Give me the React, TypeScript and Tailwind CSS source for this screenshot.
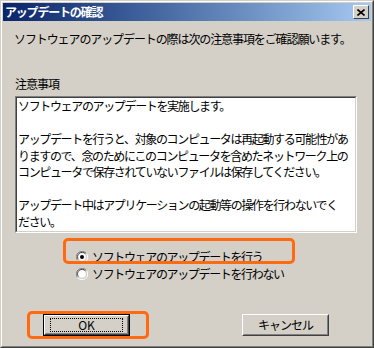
import React from "react";

const jp = "font-['Noto_Sans_CJK_JP','Noto_Sans_CJK_SC',sans-serif]";

function Radio({ checked }: { checked: boolean }): React.JSX.Element {
  return (
    <svg width="12" height="12" viewBox="0 0 12 12" className="shrink-0">
      <path d="M10.5 2.5 A5.3 5.3 0 0 0 1.5 9.5" fill="none" stroke="#808080" strokeWidth="1" />
      <path d="M9.5 3 A4.3 4.3 0 0 0 2.6 8.6" fill="none" stroke="#404040" strokeWidth="1" />
      <path d="M1.5 9.5 A5.3 5.3 0 0 0 10.5 2.5" fill="none" stroke="#ffffff" strokeWidth="1" />
      <path d="M2.6 8.6 A4.3 4.3 0 0 0 9.5 3" fill="none" stroke="#d4d0c8" strokeWidth="1" />
      <circle cx="6" cy="6" r="3.8" fill="#ffffff" />
      {checked ? <circle cx="6" cy="6" r="2" fill="#000000" /> : null}
    </svg>
  );
}

function WinButton({
  label,
  isDefault,
}: {
  label: string;
  isDefault?: boolean;
}): React.JSX.Element {
  const face = (
    <div className="flex h-full w-full border border-t-white border-l-white border-r-[#404040] border-b-[#404040]">
      <div className="flex h-full w-full items-center justify-center border border-t-[#d4d0c8] border-l-[#d4d0c8] border-r-[#808080] border-b-[#808080]">
        {isDefault ? (
          <div className="flex h-[14px] w-[73px] items-center justify-center border border-dotted border-black">
            <span className="text-[12px] leading-none text-black">{label}</span>
          </div>
        ) : (
          <span className="text-[12px] leading-none text-black tracking-[-1px]">{label}</span>
        )}
      </div>
    </div>
  );
  return isDefault ? (
    <div className="h-[22px] w-[87px] border border-black bg-[#d4d0c8]">{face}</div>
  ) : (
    <div className="h-[22px] w-[87px] bg-[#d4d0c8]">{face}</div>
  );
}

export default function App(): React.JSX.Element {
  const lines = [
    "ソフトウェアのアップデートを実施します。",
    "",
    "アップデートを行うと、対象のコンピュータは再起動する可能性があ",
    "りますので、念のためにこのコンピュータを含めたネットワーク上の",
    "コンピュータで保存されていないファイルは保存してください。",
    "",
    "アップデート中はアプリケーションの起動等の操作を行わないでく",
    "ださい。",
  ];

  return (
    <div className={`h-[348px] w-[374px] overflow-hidden ${jp}`}>
      <div className="h-full w-full border border-t-[#d4d0c8] border-l-[#d4d0c8] border-r-[#404040] border-b-[#404040] bg-[#d4d0c8]">
        <div className="flex h-full w-full flex-col border border-t-white border-l-white border-r-[#808080] border-b-[#808080] p-[1px]">
          {/* title bar */}
          <div className="flex h-[18px] items-center justify-between bg-gradient-to-r from-[#0a246a] to-[#a6caf0] pl-[2px] pr-[2px]">
            <span className="text-[12px] font-bold leading-none text-white tracking-[-1.2px]">
              アップデートの確認
            </span>
            <div className="flex h-[14px] w-[16px] items-center justify-center border border-t-white border-l-white border-r-[#404040] border-b-[#404040] bg-[#d4d0c8]">
              <svg width="8" height="7" viewBox="0 0 8 7">
                <path d="M0.5 0.5 L7.5 6.5 M7.5 0.5 L0.5 6.5" stroke="#000" strokeWidth="1.6" />
              </svg>
            </div>
          </div>

          <div className="flex flex-col px-[12px]">
            <p className="ml-[-1px] mt-[9px] text-[12px] leading-[17px] text-black tracking-[-1.1px] whitespace-nowrap">
              ソフトウェアのアップデートの際は次の注意事項をご確認願います。
            </p>

            <p className="mt-[28px] text-[12px] leading-[17px] text-black tracking-[-1px]">注意事項</p>

            <div className="mt-[4px] h-[137px] w-[342px] border border-t-[#808080] border-l-[#808080] border-r-white border-b-white">
              <div className="h-full w-full border border-t-[#404040] border-l-[#404040] border-r-[#d4d0c8] border-b-[#d4d0c8] bg-white px-[1px] pt-[0px]">
                {lines.map((line, i) => (
                  <p
                    key={i}
                    className="h-[16.5px] text-[12px] leading-[16.5px] text-black tracking-[-1.35px] whitespace-nowrap"
                  >
                    {line}
                  </p>
                ))}
              </div>
            </div>

            <div className="relative ml-[61px] mt-[15px] flex flex-col">
              <div className="flex h-[17px] items-center gap-[4px]">
                <Radio checked />
                <span className="text-[12px] leading-none text-black tracking-[-1.35px]">
                  ソフトウェアのアップデートを行う
                </span>
              </div>
              <div className="flex h-[17px] items-center gap-[4px]">
                <Radio checked={false} />
                <span className="text-[12px] leading-none text-black tracking-[-1.35px]">
                  ソフトウェアのアップデートを行わない
                </span>
              </div>
              <div className="absolute left-[-13px] top-[-10px] h-[26px] w-[232px] rounded-[5px] border-[3px] border-[#ff6a10]" />
            </div>

            <div className="mt-[32px] flex justify-between pl-[28px] pr-[30px]">
              <div className="relative">
                <WinButton label="OK" isDefault />
                <div className="absolute left-[-16px] top-[-3px] h-[28px] w-[122px] rounded-[5px] border-[3px] border-[#ff6a10]" />
              </div>
              <WinButton label="キャンセル" />
            </div>
          </div>
        </div>
      </div>
    </div>
  );
}
